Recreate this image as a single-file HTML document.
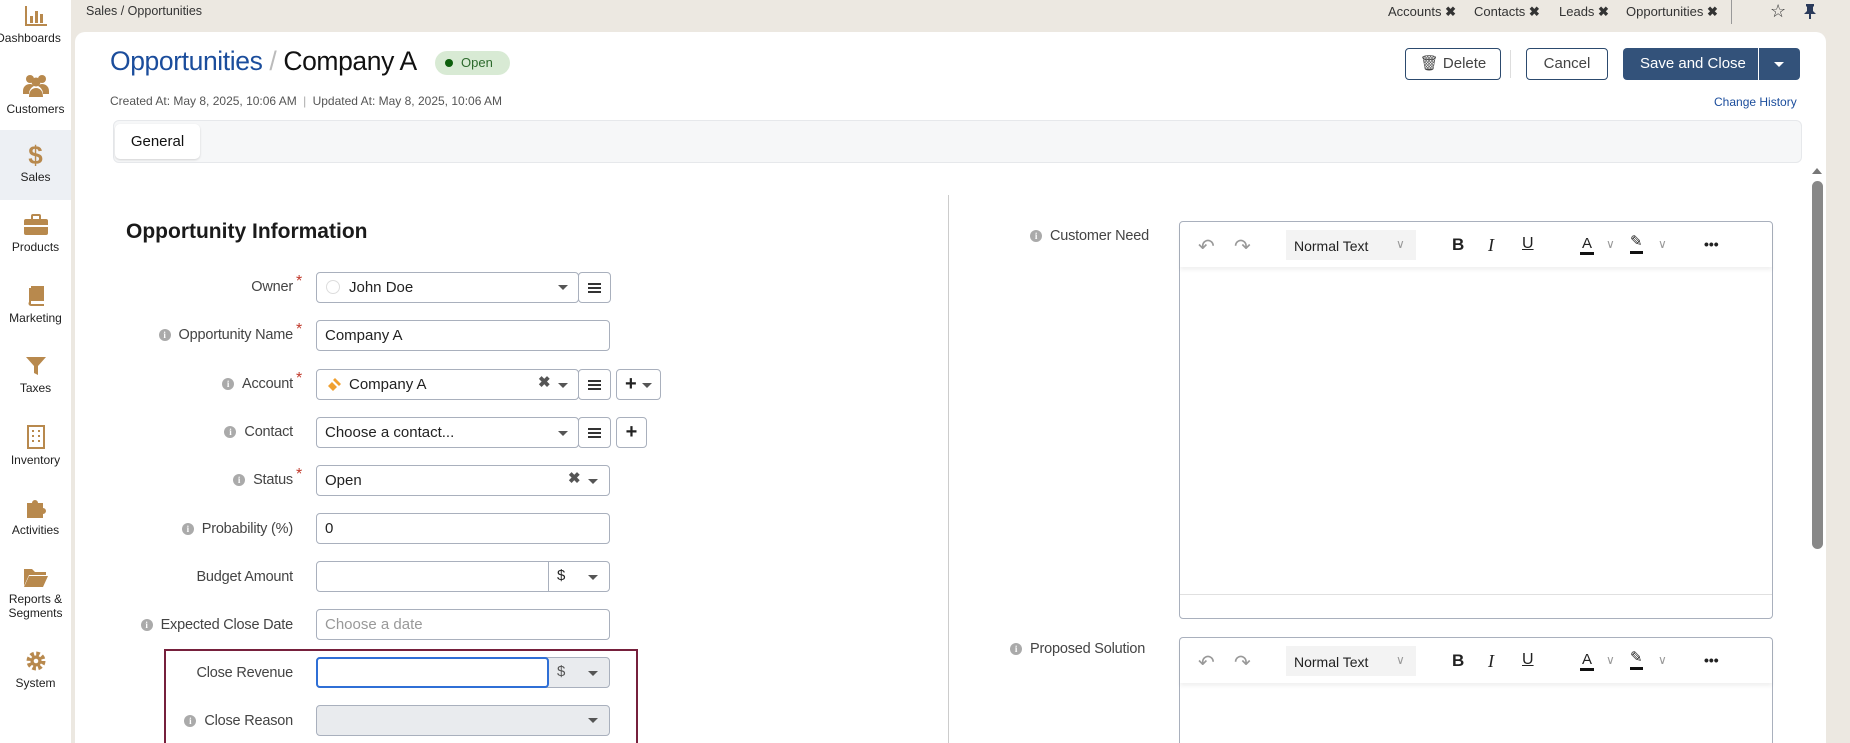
<!DOCTYPE html>
<html style="overflow:hidden;height:743px"><head><meta charset="utf-8"><style>
*{box-sizing:border-box;margin:0;padding:0}
html,body{width:1850px;height:743px;overflow:hidden}
body{background:#ece8e1;font-family:"Liberation Sans",sans-serif;color:#222;position:relative}
.abs{position:absolute}
#side{left:0;top:0;width:71px;height:743px;background:#fff}
.si{position:absolute;left:0;width:71px;text-align:center;font-size:12px;color:#222}
.si svg{display:block;margin:0 auto 4px}
#card{left:75px;top:32px;width:1751px;height:711px;background:#fff;border-radius:10px 10px 0 0}
.lbl{position:absolute;right:1557px;font-size:14.5px;color:#444;letter-spacing:-.2px;white-space:nowrap}
.ast{position:absolute;left:296px;color:#c0392b;font-size:16px}
.info{display:inline-block;width:12px;height:12px;border-radius:50%;background:#aaa;color:#fff;font-size:9px;font-weight:bold;text-align:center;line-height:12px;margin-right:8px;vertical-align:1px;font-family:"Liberation Serif",serif}
.inp{position:absolute;left:316px;height:31px;border:1px solid #a9b0bd;border-radius:4px;font-size:15px;line-height:29px;padding-left:8px;color:#222;background:#fff}
.btn{position:absolute;height:31px;border:1px solid #a9b0bd;border-radius:4px;background:#fff;text-align:center;line-height:29px}
.car{position:absolute;width:0;height:0;border-left:5px solid transparent;border-right:5px solid transparent;border-top:5px solid #555}
.ham{display:inline-block;width:13px;height:2px;background:#333;box-shadow:0 -4px 0 #333,0 4px 0 #333;vertical-align:middle}
.tb{position:absolute;font-size:16px;color:#222;white-space:nowrap}
</style></head><body>
<div id="side" class="abs">
 <div class="si" style="top:5px"><svg width="24" height="22" viewBox="0 0 24 22"><path d="M2 1v19h21" stroke="#b8894d" stroke-width="2" fill="none"/><rect x="6" y="11" width="3" height="7" fill="#b8894d"/><rect x="11" y="6" width="3" height="12" fill="#b8894d"/><rect x="16" y="9" width="3" height="9" fill="#b8894d"/></svg><span style="margin-left:-14px">Dashboards</span></div>
 <div class="si" style="top:74px"><svg width="28" height="24" viewBox="0 0 28 24"><circle cx="8" cy="5" r="4" fill="#b8894d"/><circle cx="20" cy="5" r="4" fill="#b8894d"/><circle cx="14" cy="8" r="4.5" fill="#b8894d"/><path d="M1 17c0-5 4-7 7-7s4 2 4 2 -5 2-5 8H1zM27 17c0-5-4-7-7-7s-4 2-4 2 5 2 5 8h6zM7 23c0-6 3-9 7-9s7 3 7 9z" fill="#b8894d"/></svg>Customers</div>
 <div class="abs" style="left:0;top:130px;width:71px;height:70px;background:#edf0f4"></div>
 <div class="si" style="top:142px"><div style="font-size:26px;font-weight:bold;color:#b8894d;line-height:26px;margin-bottom:2px">$</div>Sales</div>
 <div class="si" style="top:214px"><svg width="26" height="22" viewBox="0 0 26 22"><rect x="1" y="5" width="24" height="16" rx="2" fill="#b8894d"/><rect x="9" y="1" width="8" height="5" rx="1" stroke="#b8894d" stroke-width="2" fill="none"/><rect x="1" y="11" width="24" height="2" fill="#fff"/></svg>Products</div>
 <div class="si" style="top:285px"><svg width="22" height="22" viewBox="0 0 22 22"><path d="M6 1h13v15H6a2.5 2.5 0 0 0 0 5h13v-2H6" fill="#b8894d"/><path d="M4 3h2v16H4z" fill="#b8894d"/></svg>Marketing</div>
 <div class="si" style="top:355px"><svg width="22" height="22" viewBox="0 0 22 22"><path d="M1 2h20l-8 9v9l-4-2v-7z" fill="#b8894d"/></svg>Taxes</div>
 <div class="si" style="top:425px"><svg width="20" height="24" viewBox="0 0 20 24"><rect x="2" y="1" width="16" height="22" stroke="#b8894d" stroke-width="2" fill="none"/><g fill="#b8894d"><rect x="6" y="5" width="2" height="2"/><rect x="12" y="5" width="2" height="2"/><rect x="6" y="10" width="2" height="2"/><rect x="12" y="10" width="2" height="2"/><rect x="6" y="15" width="2" height="2"/><rect x="12" y="15" width="2" height="2"/></g></svg>Inventory</div>
 <div class="si" style="top:495px"><svg width="24" height="24" viewBox="0 0 24 24"><path d="M3 8h5a3 3 0 1 1 6 0h5v5a3 3 0 1 1 0 6v4H3z" fill="#b8894d"/></svg>Activities</div>
 <div class="si" style="top:566px"><svg width="26" height="22" viewBox="0 0 26 22"><path d="M1 3h8l3 3h11v3H6L1 20z M6 10h19l-5 11H1z" fill="#b8894d"/></svg>Reports &amp;<br>Segments</div>
 <div class="si" style="top:650px"><svg width="22" height="22" viewBox="0 0 22 22"><circle cx="11" cy="11" r="7" fill="none" stroke="#b8894d" stroke-width="5" stroke-dasharray="3.3 2.2"/><circle cx="11" cy="11" r="5.5" fill="#b8894d"/><circle cx="11" cy="11" r="2.3" fill="#fff"/></svg>System</div>
</div>
<div class="abs" style="left:86px;top:4px;font-size:12.5px;color:#333">Sales / Opportunities</div>
<div class="abs" style="left:1388px;top:4px;font-size:13px;color:#333;white-space:nowrap">Accounts <b>✖</b></div>
<div class="abs" style="left:1474px;top:4px;font-size:13px;color:#333">Contacts <b>✖</b></div>
<div class="abs" style="left:1559px;top:4px;font-size:13px;color:#333">Leads <b>✖</b></div>
<div class="abs" style="left:1626px;top:4px;font-size:13px;color:#333">Opportunities <b>✖</b></div>
<div class="abs" style="left:1731px;top:0;width:1px;height:24px;background:#999"></div>
<div class="abs" style="left:1770px;top:1px;font-size:18px;color:#333">☆</div>
<svg class="abs" style="left:1803px;top:3px" width="14" height="16" viewBox="0 0 14 16"><path d="M3 1h8v2l-1 1v4l3 3H1l3-3V4L3 3zM6 11h2v5H6z" fill="#2a3a5a"/></svg>
<div id="card" class="abs"></div>
<div class="abs" style="left:110px;top:46px;font-size:26.5px;white-space:nowrap;letter-spacing:-.4px"><span style="color:#1b4d9c">Opportunities</span> <span style="color:#bbb">/</span> <span style="color:#111">Company A</span></div>
<div class="abs" style="left:435px;top:51px;width:75px;height:24px;border-radius:12px;background:#d8ead4;font-size:13px;color:#2d6a2d;line-height:24px;padding-left:10px"><span style="display:inline-block;width:8px;height:8px;border-radius:50%;background:#0d5f0d;margin-right:8px"></span>Open</div>
<div class="abs" style="left:110px;top:94px;font-size:12px;color:#555;white-space:nowrap">Created At: May 8, 2025, 10:06 AM <span style="color:#aaa;margin:0 3px">|</span> Updated At: May 8, 2025, 10:06 AM</div>
<div class="abs" style="left:1405px;top:48px;width:96px;height:32px;border:1px solid #2c4a6e;border-radius:4px;text-align:center;line-height:30px;font-size:15px;color:#444">🗑 Delete</div>
<div class="abs" style="left:1510px;top:50px;width:1px;height:28px;background:#ddd"></div>
<div class="abs" style="left:1526px;top:48px;width:82px;height:32px;border:1px solid #2c4a6e;border-radius:4px;text-align:center;line-height:30px;font-size:15px;color:#444">Cancel</div>
<div class="abs" style="left:1623px;top:48px;width:177px;height:32px;background:#33527a;border-radius:4px;color:#fff;font-size:15px;line-height:32px;padding-left:17px">Save and Close</div>
<div class="abs" style="left:1758px;top:48px;width:1px;height:32px;background:#fff"></div>
<div class="car" style="left:1774px;top:62px;border-top-color:#fff"></div>
<div class="abs" style="left:1714px;top:95px;font-size:12px;color:#1b4d9c">Change History</div>
<div class="abs" style="left:113px;top:120px;width:1689px;height:43px;background:#f6f7f8;border:1px solid #e6e8eb;border-radius:6px"></div>
<div class="abs" style="left:115px;top:124px;width:85px;height:35px;background:#fff;border-radius:5px;box-shadow:0 1px 2px rgba(0,0,0,.15);font-size:15px;line-height:35px;text-align:center;color:#111">General</div>
<div class="abs" style="left:1812px;top:168px;width:0;height:0;border-left:5px solid transparent;border-right:5px solid transparent;border-bottom:6px solid #777"></div>
<div class="abs" style="left:1812px;top:181px;width:11px;height:368px;background:#888;border-radius:6px"></div>
<div class="abs" style="left:126px;top:220px;font-size:21px;font-weight:bold;color:#1a1a1a">Opportunity Information</div>
<div class="abs" style="left:948px;top:195px;width:1px;height:548px;background:#ccc"></div>

<div class="lbl" style="top:279px">Owner</div><div class="ast" style="top:273px">*</div>
<div class="inp" style="top:272px;width:263px;padding-left:32px">John Doe</div>
<div class="abs" style="left:326px;top:280px;width:14px;height:14px;border-radius:50%;border:1px solid #ddd"></div>
<div class="car" style="left:558px;top:285px"></div>
<div class="btn" style="left:578px;top:272px;width:33px"><span class="ham"></span></div>

<div class="lbl" style="top:327px"><span class="info">i</span>Opportunity Name</div><div class="ast" style="top:321px">*</div>
<div class="inp" style="top:320px;width:294px">Company A</div>

<div class="lbl" style="top:376px"><span class="info">i</span>Account</div><div class="ast" style="top:370px">*</div>
<div class="inp" style="top:369px;width:263px;padding-left:32px">Company A</div>
<svg class="abs" style="left:326px;top:377px" width="16" height="16" viewBox="0 0 16 16"><path d="M9 1l6 6-2 2-6-6zM6 5l5 5-4 4-5-5z" fill="#f0a030"/></svg>
<div class="abs" style="left:538px;top:373px;font-size:15px;font-weight:bold;color:#555">✖</div>
<div class="car" style="left:558px;top:383px"></div>
<div class="btn" style="left:578px;top:369px;width:33px"><span class="ham"></span></div>
<div class="btn" style="left:616px;top:369px;width:45px;font-size:20px;font-weight:bold;text-align:left;padding-left:8px">+</div>
<div class="car" style="left:642px;top:383px"></div>

<div class="lbl" style="top:424px"><span class="info">i</span>Contact</div>
<div class="inp" style="top:417px;width:263px">Choose a contact...</div>
<div class="car" style="left:558px;top:431px"></div>
<div class="btn" style="left:578px;top:417px;width:33px"><span class="ham"></span></div>
<div class="btn" style="left:616px;top:417px;width:31px;font-size:20px;font-weight:bold">+</div>

<div class="lbl" style="top:472px"><span class="info">i</span>Status</div><div class="ast" style="top:466px">*</div>
<div class="inp" style="top:465px;width:294px">Open</div>
<div class="abs" style="left:568px;top:469px;font-size:15px;font-weight:bold;color:#555">✖</div>
<div class="car" style="left:588px;top:479px"></div>

<div class="lbl" style="top:521px"><span class="info">i</span>Probability (%)</div>
<div class="inp" style="top:513px;width:294px">0</div>

<div class="lbl" style="top:569px">Budget Amount</div>
<div class="inp" style="top:561px;width:294px"></div>
<div class="abs" style="left:548px;top:562px;width:1px;height:29px;background:#a9b0bd"></div>
<div class="abs" style="left:557px;top:567px;font-size:15px">$</div>
<div class="car" style="left:588px;top:575px"></div>

<div class="lbl" style="top:617px"><span class="info">i</span>Expected Close Date</div>
<div class="inp" style="top:609px;width:294px;color:#999">Choose a date</div>

<div class="abs" style="left:164px;top:649px;width:474px;height:94px;border:2px solid #76203c;border-bottom:none"></div>
<div class="lbl" style="top:665px">Close Revenue</div>
<div class="inp" style="top:657px;width:294px;background:#e9ebee"></div>
<div class="abs" style="left:316px;top:657px;width:233px;height:31px;border:2px solid #2f6fd6;border-radius:4px;background:#fff"></div>
<div class="abs" style="left:557px;top:663px;font-size:15px;color:#555">$</div>
<div class="car" style="left:588px;top:671px"></div>
<div class="lbl" style="top:713px"><span class="info">i</span>Close Reason</div>
<div class="inp" style="top:705px;width:294px;background:#e9ebee"></div>
<div class="car" style="left:588px;top:718px"></div>

<div class="abs" style="left:1030px;top:228px;font-size:14.5px;color:#444;letter-spacing:-.2px"><span class="info">i</span>Customer Need</div>
<div class="abs" style="left:1179px;top:221px;width:594px;height:398px;border:1px solid #a9b0bd;border-radius:4px"></div>
<div class="abs" style="left:1180px;top:222px;width:592px;height:45px;box-shadow:0 3px 4px rgba(0,0,0,.06)"></div>
<div class="abs" style="left:1180px;top:594px;width:592px;height:1px;background:#e0e0e0"></div>
<div class="abs" style="left:1010px;top:641px;font-size:14.5px;color:#444;letter-spacing:-.2px"><span class="info">i</span>Proposed Solution</div>
<div class="abs" style="left:1179px;top:637px;width:594px;height:106px;border:1px solid #a9b0bd;border-bottom:none;border-radius:4px 4px 0 0"></div>
<div class="abs" style="left:1180px;top:638px;width:592px;height:45px;box-shadow:0 3px 4px rgba(0,0,0,.06)"></div>

<div class="abs" style="left:0;top:0">
<div class="tb" style="left:1198px;top:234px;color:#999;font-size:20px">↶</div>
<div class="tb" style="left:1234px;top:234px;color:#999;font-size:20px">↷</div>
<div class="abs" style="left:1286px;top:230px;width:130px;height:30px;background:#f3f3f3"></div>
<div class="tb" style="left:1294px;top:238px;font-size:14px">Normal Text</div>
<div class="tb" style="left:1396px;top:237px;font-size:12px;color:#999">∨</div>
<div class="tb" style="left:1452px;top:235px;font-weight:bold;font-size:17px">B</div>
<div class="tb" style="left:1488px;top:235px;font-style:italic;font-family:'Liberation Serif',serif;font-size:18px">I</div>
<div class="tb" style="left:1522px;top:235px;text-decoration:underline;font-size:16px">U</div>
<div class="tb" style="left:1580px;top:235px;font-size:15px;border-bottom:3px solid #111;line-height:17px;padding:0 2px">A</div>
<div class="tb" style="left:1606px;top:237px;font-size:12px;color:#999">∨</div>
<div class="tb" style="left:1630px;top:233px;font-size:15px;border-bottom:3px solid #111;line-height:18px">✎</div>
<div class="tb" style="left:1658px;top:237px;font-size:12px;color:#999">∨</div>
<div class="tb" style="left:1704px;top:236px;font-size:14px;font-weight:bold">•••</div>
</div>
<div class="abs" style="left:0;top:416px;width:1850px;height:60px">
<div class="tb" style="left:1198px;top:234px;color:#999;font-size:20px">↶</div>
<div class="tb" style="left:1234px;top:234px;color:#999;font-size:20px">↷</div>
<div class="abs" style="left:1286px;top:230px;width:130px;height:30px;background:#f3f3f3"></div>
<div class="tb" style="left:1294px;top:238px;font-size:14px">Normal Text</div>
<div class="tb" style="left:1396px;top:237px;font-size:12px;color:#999">∨</div>
<div class="tb" style="left:1452px;top:235px;font-weight:bold;font-size:17px">B</div>
<div class="tb" style="left:1488px;top:235px;font-style:italic;font-family:'Liberation Serif',serif;font-size:18px">I</div>
<div class="tb" style="left:1522px;top:235px;text-decoration:underline;font-size:16px">U</div>
<div class="tb" style="left:1580px;top:235px;font-size:15px;border-bottom:3px solid #111;line-height:17px;padding:0 2px">A</div>
<div class="tb" style="left:1606px;top:237px;font-size:12px;color:#999">∨</div>
<div class="tb" style="left:1630px;top:233px;font-size:15px;border-bottom:3px solid #111;line-height:18px">✎</div>
<div class="tb" style="left:1658px;top:237px;font-size:12px;color:#999">∨</div>
<div class="tb" style="left:1704px;top:236px;font-size:14px;font-weight:bold">•••</div>
</div>
</body></html>
